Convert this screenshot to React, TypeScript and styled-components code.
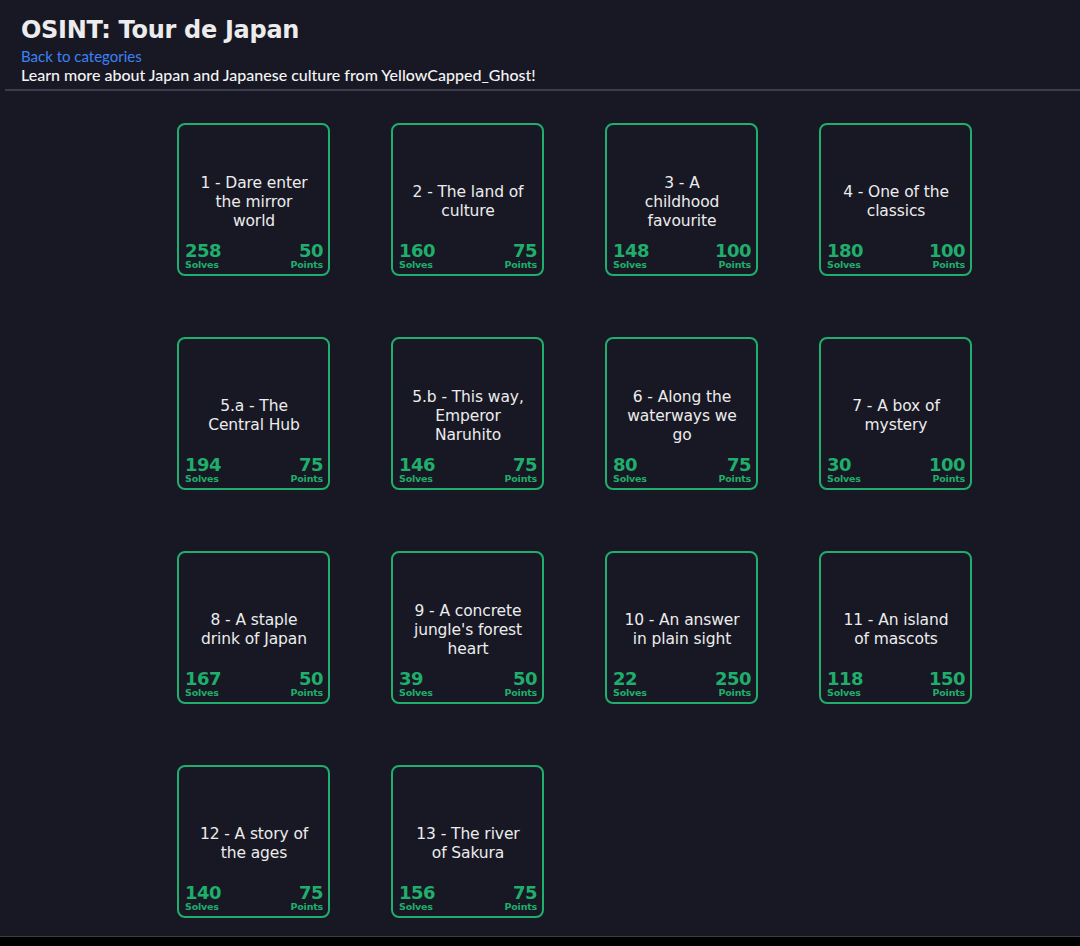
import React from "react";
import styled, { createGlobalStyle } from "styled-components";

const Global = createGlobalStyle`
  html, body { margin: 0; padding: 0; background: #181824; }
  body { font-family: "Lato", "Liberation Sans", sans-serif; color: #f0f0f0; }
`;

const Page = styled.div`
  display: flex;
  flex-direction: column;
  min-height: 946px;
  background: #181824;
`;

const Header = styled.header`
  padding: 14px 0 0 5px;
`;

const HeaderText = styled.div`
  padding: 0 16px 5px 16px;
  display: flex;
  flex-direction: column;
`;

const Title = styled.h1`
  margin: 0;
  font-family: "DejaVu Sans", sans-serif;
  font-weight: 700;
  font-size: 24px;
  line-height: 33px;
  letter-spacing: -0.3px;
  color: #ececec;
`;

const BackLink = styled.a`
  font-family: "Lato", sans-serif;
  font-size: 15px;
  line-height: 18px;
  color: #3b82f6;
  text-decoration: none;
`;

const Desc = styled.p`
  margin: 0;
  font-family: "Lato", sans-serif;
  font-size: 16px;
  line-height: 19px;
  font-weight: 500;
  color: #f4f4f4;
`;

const Divider = styled.hr`
  margin: 0;
  border: none;
  height: 2px;
  background: #3d3c4a;
`;

const Grid = styled.main`
  flex: 1;
  display: grid;
  grid-template-columns: repeat(4, 153px);
  grid-auto-rows: 153px;
  column-gap: 61px;
  row-gap: 61px;
  padding: 32px 0 18px 177px;
`;

const Card = styled.div`
  box-sizing: border-box;
  border: 2px solid #1fae6b;
  border-radius: 8px;
  display: grid;
  grid-template-areas: "stack";
  padding: 5px 5px 4px 6px;
`;

const CardTitle = styled.div`
  grid-area: stack;
  align-self: center;
  justify-self: center;
  margin-top: 4px;
  text-align: center;
  white-space: pre-line;
  width: 117px;
  font-family: "DejaVu Sans", sans-serif;
  font-size: 15.5px;
  line-height: 19px;
  font-weight: 500;
  letter-spacing: -0.1px;
  color: #ececec;
`;

const Stats = styled.div`
  grid-area: stack;
  align-self: end;
  display: flex;
  justify-content: space-between;
  align-items: flex-end;
`;

const Stat = styled.div<{ $right?: boolean }>`
  display: flex;
  flex-direction: column;
  align-items: ${(p) => (p.$right ? "flex-end" : "flex-start")};
  color: #1fae6b;
  font-family: "DejaVu Sans", sans-serif;
`;

const StatValue = styled.span`
  font-size: 18px;
  font-weight: 700;
  line-height: 17px;
  letter-spacing: -0.5px;
`;

const StatLabel = styled.span`
  font-size: 9.5px;
  font-weight: 600;
  line-height: 11px;
  letter-spacing: -0.2px;
`;

const Footer = styled.footer`
  height: 9px;
  background: #000;
  border-top: 1px solid #3a3e3a;
`;

const challenges = [
  { name: "1 - Dare enter the mirror world", solves: 258, points: 50 },
  { name: "2 - The land of culture", solves: 160, points: 75 },
  { name: "3 - A\nchildhood favourite", solves: 148, points: 100 },
  { name: "4 - One of the classics", solves: 180, points: 100 },
  { name: "5.a - The Central Hub", solves: 194, points: 75 },
  { name: "5.b - This way, Emperor Naruhito", solves: 146, points: 75 },
  { name: "6 - Along the waterways we go", solves: 80, points: 75 },
  { name: "7 - A box of mystery", solves: 30, points: 100 },
  { name: "8 - A staple drink of Japan", solves: 167, points: 50 },
  { name: "9 - A concrete jungle's forest heart", solves: 39, points: 50 },
  { name: "10 - An answer in plain sight", solves: 22, points: 250 },
  { name: "11 - An island of mascots", solves: 118, points: 150 },
  { name: "12 - A story of the ages", solves: 140, points: 75 },
  { name: "13 - The river of Sakura", solves: 156, points: 75 },
];

export default function App() {
  return (
    <Page>
      <Global />
      <Header>
        <HeaderText>
          <Title>OSINT: Tour de Japan</Title>
          <BackLink href="#">Back to categories</BackLink>
          <Desc>Learn more about Japan and Japanese culture from YellowCapped_Ghost!</Desc>
        </HeaderText>
        <Divider />
      </Header>
      <Grid>
        {challenges.map((c) => (
          <Card key={c.name}>
            <CardTitle>{c.name}</CardTitle>
            <Stats>
              <Stat>
                <StatValue>{c.solves}</StatValue>
                <StatLabel>Solves</StatLabel>
              </Stat>
              <Stat $right>
                <StatValue>{c.points}</StatValue>
                <StatLabel>Points</StatLabel>
              </Stat>
            </Stats>
          </Card>
        ))}
      </Grid>
      <Footer />
    </Page>
  );
}
